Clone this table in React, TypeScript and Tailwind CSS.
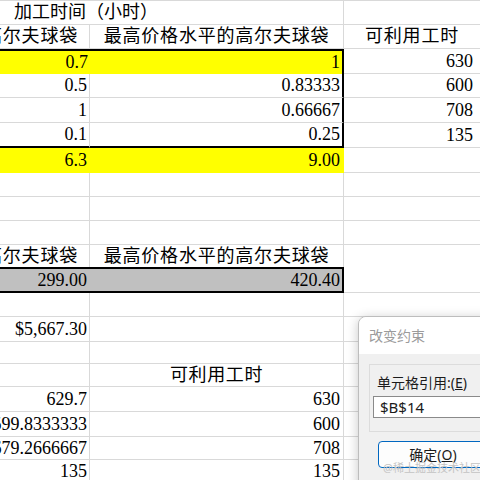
import type { ReactNode } from 'react';

// column widths of the visible part of the sheet (B is scrolled, only its right end shows)
const B = 'w-[90px]';
const C = 'w-[254px]';

const grid = 'border-r border-b border-[#d9d9d9]';
const yellow = 'bg-[#ffff00]';

function Cell({ w, className = '', children }: { w: string; className?: string; children?: ReactNode }) {
    return (
        <div className={`${w} h-full shrink-0 flex items-center overflow-hidden whitespace-nowrap ${className}`}>
            {children}
        </div>
    );
}

function Row({ h, children }: { h: string; children: ReactNode }) {
    return <div className={`flex ${h}`}>{children}</div>;
}

function D({ children, head = false, line = true }: { children?: ReactNode; head?: boolean; line?: boolean }) {
    return (
        <div
            className={`flex-1 h-full flex items-center overflow-hidden whitespace-nowrap
                ${head ? 'justify-center tracking-[0.8px]' : 'justify-end pr-[7px]'}
                ${line ? 'border-b border-[#d9d9d9]' : ''}`}
        >
            {children}
        </div>
    );
}

function Empty({ h }: { h: string }) {
    return (
        <Row h={h}>
            <Cell w={B} className={grid} />
            <Cell w={C} className={grid} />
            <D />
        </Row>
    );
}

export default function App() {
    return (
        <div className="relative w-[480px] h-[480px] overflow-hidden bg-white text-black text-[18px] font-['Liberation_Serif','Noto_Sans_CJK_SC',serif]">
            <div className="flex flex-col border-t border-[#d9d9d9]">
                {/* title spills over the column line */}
                <Row h="h-[24px]">
                    <Cell w="w-[344px]" className={`${grid} pl-[14px]`}>加工时间（小时）</Cell>
                    <D />
                </Row>
                <Row h="h-[24px]">
                    <Cell w={B} className={`${grid} justify-end pr-[11px] tracking-[0.8px]`}>最低价格水平的高尔夫球袋</Cell>
                    <Cell w={C} className={`${grid} justify-center tracking-[0.8px]`}>最高价格水平的高尔夫球袋</Cell>
                    <D head>可利用工时</D>
                </Row>

                {/* boxed coefficient block */}
                <Row h="h-[25px]">
                    <Cell w={B} className={`${yellow} border-t-2 border-black justify-end pr-[2px]`}>0.7</Cell>
                    <Cell w={C} className={`${yellow} border-t-2 border-r-2 border-black justify-end pr-[2px]`}>1</Cell>
                    <D>630</D>
                </Row>
                <Row h="h-[24px]">
                    <Cell w={B} className={`${grid} justify-end pr-[2px]`}>0.5</Cell>
                    <Cell w={C} className="border-b border-b-[#d9d9d9] border-r-2 border-r-black justify-end pr-[2px]">0.83333</Cell>
                    <D>600</D>
                </Row>
                <Row h="h-[25px]">
                    <Cell w={B} className={`${grid} justify-end pr-[2px]`}>1</Cell>
                    <Cell w={C} className="border-b border-b-[#d9d9d9] border-r-2 border-r-black justify-end pr-[2px]">0.66667</Cell>
                    <D>708</D>
                </Row>
                <Row h="h-[25px]">
                    <Cell w={B} className="border-r border-r-[#d9d9d9] border-b-2 border-b-black justify-end pr-[2px]">0.1</Cell>
                    <Cell w={C} className="border-r-2 border-b-2 border-black justify-end pr-[2px]">0.25</Cell>
                    <D>135</D>
                </Row>
                <Row h="h-[25px]">
                    <Cell w={B} className={`${yellow} justify-end pr-[3px]`}>6.3</Cell>
                    <Cell w={C} className={`${yellow} justify-end pr-[4px]`}>9.00</Cell>
                    <D />
                </Row>

                <Empty h="h-[24px]" />
                <Empty h="h-[24px]" />
                <Empty h="h-[24px]" />

                <Row h="h-[22px]">
                    <Cell w={B} className="border-r border-[#d9d9d9] justify-end pr-[11px] tracking-[0.8px]">最低价格水平的高尔夫球袋</Cell>
                    <Cell w={C} className="border-r border-[#d9d9d9] justify-center tracking-[0.8px]">最高价格水平的高尔夫球袋</Cell>
                    <D line={false} />
                </Row>
                <Row h="h-[26px]">
                    <Cell w={B} className="bg-[#c0c0c0] border-y-2 border-black justify-end pr-[3px]">299.00</Cell>
                    <Cell w={C} className="bg-[#c0c0c0] border-y-2 border-r-2 border-black justify-end pr-[2px]">420.40</Cell>
                    <D />
                </Row>

                <Empty h="h-[24px]" />
                <Row h="h-[25px]">
                    <Cell w={B} className={`${grid} justify-end pr-[2px]`}>$5,667.30</Cell>
                    <Cell w={C} className={grid} />
                    <D />
                </Row>
                <Empty h="h-[22px]" />
                <Row h="h-[23px]">
                    <Cell w={B} className={grid} />
                    <Cell w={C} className={`${grid} justify-center tracking-[0.6px]`}>可利用工时</Cell>
                    <D />
                </Row>
                <Row h="h-[25px]">
                    <Cell w={B} className={`${grid} justify-end pr-[2px]`}>629.7</Cell>
                    <Cell w={C} className={`${grid} justify-end pr-[3px]`}>630</Cell>
                    <D />
                </Row>
                <Row h="h-[25px]">
                    <Cell w={B} className={`${grid} justify-end pr-[2px]`}>599.8333333</Cell>
                    <Cell w={C} className={`${grid} justify-end pr-[3px]`}>600</Cell>
                    <D />
                </Row>
                <Row h="h-[23px]">
                    <Cell w={B} className={`${grid} justify-end pr-[2px]`}>679.2666667</Cell>
                    <Cell w={C} className={`${grid} justify-end pr-[3px]`}>708</Cell>
                    <D />
                </Row>
                <Row h="h-[24px]">
                    <Cell w={B} className={`${grid} justify-end pr-[2px]`}>135</Cell>
                    <Cell w={C} className={`${grid} justify-end pr-[3px]`}>135</Cell>
                    <D />
                </Row>
            </div>

            {/* 改变约束 dialog, partly off screen */}
            <div className="absolute left-[358px] top-[316px] w-[170px] h-[200px] rounded-[8px] border border-[#bdbdbd] bg-[#f0f0f0] overflow-hidden shadow-[0_2px_12px_rgba(0,0,0,0.22)] font-['Noto_Sans','Noto_Sans_CJK_SC',sans-serif]">
                <div className="h-[37px] bg-white flex items-center pl-[10px] text-[14px] text-[#9b9b9b]">改变约束</div>
                <div className="pl-[10px] pt-[10px]">
                    <div className="w-[200px] h-[68px] border border-[#dcdcdc] pl-[3px] pt-[8px]">
                        <div className="pl-[4px] text-[14px] leading-[20px] text-[#1b1b1b]">
                            单元格引用:(<span className="underline">E</span>)
                        </div>
                        <div className="mt-[3px] h-[22px] w-[190px] bg-white border border-[#8a8a8a] pl-[6px] flex items-center text-[15px] text-[#1b1b1b]">
                            $B$14
                        </div>
                    </div>
                    <div className="mt-[9px] ml-[9px] w-[110px] h-[27px] rounded-[4px] border border-[#0067c0] bg-[#fdfdfd] flex items-center justify-center text-[14px] text-[#1b1b1b]">
                        确定(<span className="underline">O</span>)
                    </div>
                </div>
            </div>

            <div className="absolute left-[383px] top-[460px] text-[11px] text-[#c4c4c4] whitespace-nowrap font-['Noto_Sans','Noto_Sans_CJK_SC',sans-serif]">
                @稀土掘金技术社区
            </div>
        </div>
    );
}
